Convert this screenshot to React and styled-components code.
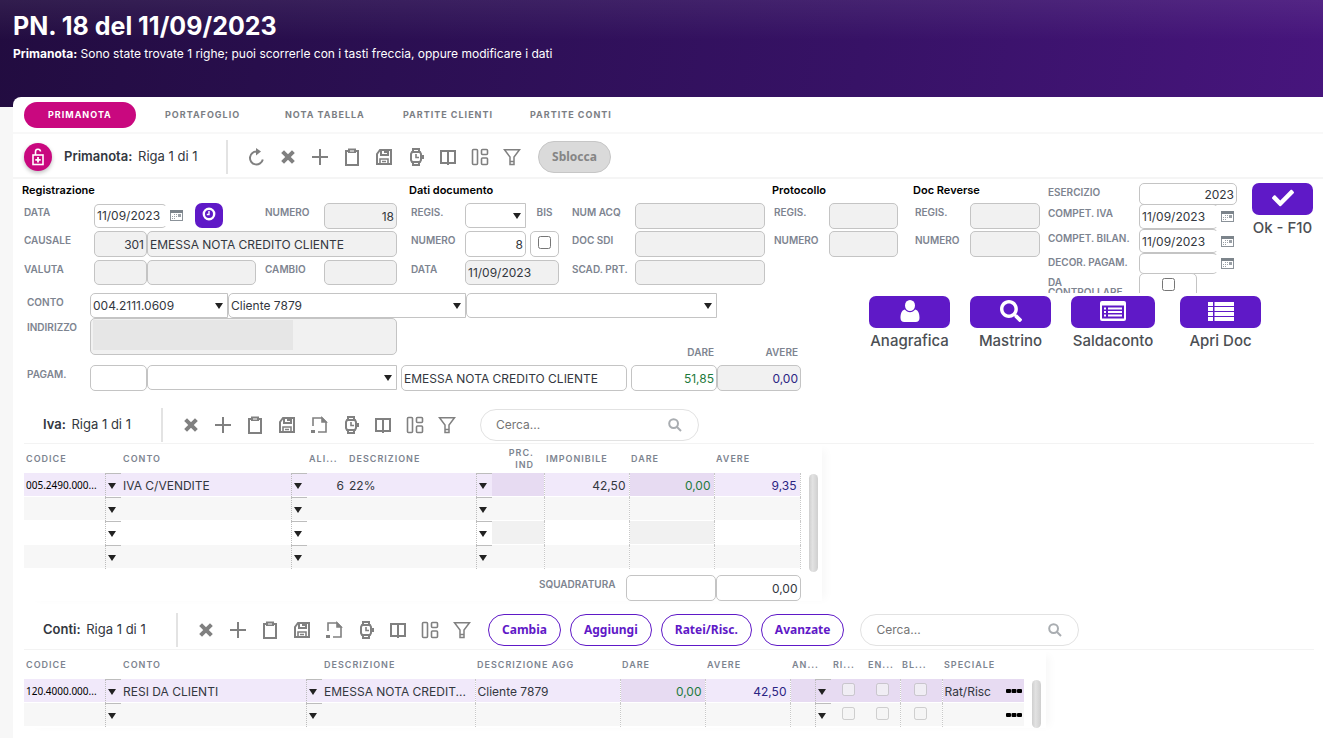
import React from "react";
import styled, { createGlobalStyle, css } from "styled-components";
import { FaCheck, FaSearch } from "react-icons/fa";

const GlobalStyle = createGlobalStyle`
  * {
    box-sizing: border-box;
  }
  body {
    margin: 0;
    background: #f7f7f7;
    font-family: Inter, sans-serif;
    font-size: 12px;
    color: #333740;
    overflow: hidden;
  }
  button, input, select, textarea {
    font: inherit;
    color: inherit;
    margin: 0;
  }
`;

const icons = {
  refresh: (
    <g strokeWidth="2">
      <path d="M10 3.5 A6.5 6.5 0 1 0 15.8 11.5" />
      <path d="M9 0 L14 3.6 L9 7.4 Z" fill="currentColor" stroke="none" />
    </g>
  ),
  remove: <path d="M3.6 3.6 L14.4 14.4 M14.4 3.6 L3.6 14.4" strokeWidth="4" />,
  add: <path d="M9 1 V17 M1 9 H17" strokeWidth="2" />,
  clipboard: (
    <g strokeWidth="2">
      <path d="M3 3 H15 V17 H3 Z" />
      <path d="M5 0.5 H13 V5 H5 Z" fill="currentColor" stroke="none" />
      <path d="M7 3 H11" stroke="#fff" strokeWidth="1" />
    </g>
  ),
  save: (
    <g strokeWidth="2">
      <path d="M5 2 H16 V16 H2 V6 Z" />
      <path d="M6 2 V7 H13 V2 M9 4 H13" />
      <path d="M5 16 V11 H13 V16 M7 13.5 H11" strokeWidth="1.6" />
    </g>
  ),
  page: (
    <g strokeWidth="1.6">
      <path d="M3 10 V2 H12 L16 6 V16 H8" />
      <path d="M12 2 V6 H16 Z" fill="currentColor" />
      <path d="M1 14 H5 V17 H1 Z" fill="currentColor" stroke="none" />
    </g>
  ),
  watch: (
    <g strokeWidth="2">
      <path d="M6 4 V1 H12 V4 M6 14 V17 H12 V14" />
      <path d="M5 4 H13 L14 6 V12 L13 14 H5 L4 12 V6 Z" />
      <path d="M9 6 V9.5 H12" strokeWidth="1.6" />
      <path d="M15 7 H17 V11 H15 Z" fill="currentColor" stroke="none" />
    </g>
  ),
  book: (
    <g strokeWidth="2">
      <path d="M2 3 H16 V15 H2 Z M9 3 V17" />
    </g>
  ),
  layout: (
    <g strokeWidth="1.6">
      <rect x="1.5" y="1.5" width="5" height="15" rx="1" />
      <rect x="10.5" y="1.5" width="6" height="5" rx="1" />
      <rect x="10.5" y="10" width="6" height="6.5" rx="1" />
    </g>
  ),
  filter: (
    <path
      d="M1.5 1.8 H16.5 L11 9 V16.5 H7 V9 Z M7.5 13.5 H10.5"
      strokeWidth="1.5"
    />
  ),
};

const labels = {
  refresh: "Aggiorna",
  remove: "Elimina",
  add: "Inserisci",
  clipboard: "Appunti",
  save: "Salva",
  page: "Duplica",
  watch: "Storico",
  book: "Dettaglio",
  layout: "Layout",
  filter: "Filtro",
};

const subTools = [
  "remove",
  "add",
  "clipboard",
  "save",
  "page",
  "watch",
  "book",
  "layout",
  "filter",
];
const mainTools = ["refresh", ...subTools.filter((t) => t !== "page")];

function Tools({ names }) {
  return (
    <ToolGroup>
      {names.map((name) => (
        <ToolButton key={name} type="button" aria-label={labels[name]}>
          <svg width="18" height="18" viewBox="0 0 18 18" fill="none" stroke="currentColor">
            {icons[name]}
          </svg>
        </ToolButton>
      ))}
    </ToolGroup>
  );
}

function UserIcon() {
  return (
    <svg width="20" height="22" viewBox="0 0 20 22" fill="currentColor">
      <ellipse cx="10" cy="5.5" rx="5" ry="5.5" />
      <path d="M4.8 9.6 C6 11.3 8 12.2 10 12.2 C12 12.2 14 11.3 15.2 9.6 C18.5 10.3 19.5 14 19.5 18 C19.5 20.4 18 22 15.8 22 H4.2 C2 22 0.5 20.4 0.5 18 C0.5 14 1.5 10.3 4.8 9.6 Z" />
    </svg>
  );
}

function CardIcon() {
  return (
    <svg width="26" height="20" viewBox="0 0 26 20" fill="currentColor">
      <path
        fillRule="evenodd"
        d="M2 0 H24 Q26 0 26 2 V18 Q26 20 24 20 H2 Q0 20 0 18 V2 Q0 0 2 0 Z M2 4.5 V17.5 H24 V4.5 Z"
      />
      <path d="M4 6.5 H6 V8.5 H4 Z M4 10 H6 V12 H4 Z M4 13.5 H6 V15.5 H4 Z" />
      <path d="M8 6.5 H22 V8.5 H8 Z M8 10 H22 V12 H8 Z M8 13.5 H22 V15.5 H8 Z" />
    </svg>
  );
}

function ListIcon() {
  return (
    <svg width="26" height="20" viewBox="0 0 26 20" fill="currentColor">
      {[0, 5, 10, 15].map((y) => (
        <g key={y}>
          <rect x="0" y={y + 1} width="5" height="4" />
          <rect x="6.5" y={y + 1} width="19.5" height="4" />
        </g>
      ))}
    </svg>
  );
}

function Text({ id, label, value = "", ...rest }) {
  return (
    <Field id={id} aria-label={label} defaultValue={value} {...rest} />
  );
}

function Combo({ id, label, value = "", width }) {
  return (
    <ComboBox $width={width}>
      <select id={id} aria-label={label} defaultValue={value}>
        <option>{value}</option>
      </select>
    </ComboBox>
  );
}

function CalendarIcon() {
  return (
    <svg width="13" height="11" viewBox="0 0 13 11">
      <rect x="0.5" y="0.5" width="12" height="10" fill="#fff" stroke="#8b9299" />
      <rect x="0" y="0" width="13" height="3" fill="#7c848b" />
      <g fill="#9aa0a6">
        <rect x="4" y="4" width="1" height="1" />
        <rect x="6" y="4" width="1" height="1" />
        <rect x="2" y="6" width="1" height="1" />
        <rect x="4" y="6" width="1" height="1" />
        <rect x="6" y="6" width="1" height="1" />
        <rect x="2" y="8" width="1" height="1" />
        <rect x="4" y="8" width="1" height="1" />
        <rect x="8" y="4" width="3" height="3" />
      </g>
    </svg>
  );
}

function DateInput({ id, value, width, height }) {
  return (
    <DateBox>
      <Field id={id} defaultValue={value} $width={width} $height={height} $open />
      <IconButton type="button" aria-label="Apri calendario">
        <CalendarIcon />
      </IconButton>
    </DateBox>
  );
}

function Search({ id, gap }) {
  return (
    <SearchBox $gap={gap}>
      <input id={id} type="search" placeholder="Cerca..." aria-label="Cerca" />
      <svg width="14" height="14" viewBox="0 0 14 14" fill="none" stroke="#a9adb1" strokeWidth="2">
        <circle cx="5.6" cy="5.6" r="4.4" />
        <path d="M9 9 L13 13" />
      </svg>
    </SearchBox>
  );
}

function CellSelect({ value = "", label, small }) {
  return (
    <CellCombo $small={small}>
      <span>{value}</span>
      <i>
        <select aria-label={label} defaultValue="">
          <option value=""></option>
        </select>
      </i>
    </CellCombo>
  );
}

const ivaRows = [
  { codice: "005.2490.000...", conto: "IVA C/VENDITE", ali: "6", descr: "22%", imp: "42,50", dare: "0,00", avere: "9,35" },
  {},
  {},
  {},
];

const contiRows = [
  {
    codice: "120.4000.000...",
    conto: "RESI DA CLIENTI",
    descr: "EMESSA NOTA CREDIT...",
    agg: "Cliente 7879",
    dare: "0,00",
    avere: "42,50",
    speciale: "Rat/Risc",
  },
  {},
];

export default function App() {
  return (
    <>
      <GlobalStyle />
      <Banner>
        <h1>PN. 18 del 11/09/2023</h1>
        <p>
          <b>Primanota:</b> Sono state trovate 1 righe; puoi scorrerle con i
          tasti freccia, oppure modificare i dati
        </p>
      </Banner>
      <Panel>
        <Tabs>
          <Tab href="#primanota" $active>Primanota</Tab>
          <Tab href="#portafoglio">Portafoglio</Tab>
          <Tab href="#nota">Nota tabella</Tab>
          <Tab href="#clienti">Partite clienti</Tab>
          <Tab href="#conti">Partite conti</Tab>
        </Tabs>

        <MainBar>
          <LockButton type="button" aria-label="Blocca">
            <svg width="12" height="18" viewBox="0 0 12 18" fill="none" stroke="#fff">
              <path d="M3.5 7 V4 A2.5 2.5 0 0 1 8.5 3.5" strokeWidth="1.6" />
              <rect x="1" y="7" width="10" height="9.5" strokeWidth="1.6" />
              <path d="M6 9 V14.5 M3.3 11.8 H8.7" strokeWidth="1.8" />
            </svg>
          </LockButton>
          <BarTitle $width={164}>
            <b>Primanota:</b> Riga 1 di 1
          </BarTitle>
          <Tools names={mainTools} />
          <UnlockButton type="button">Sblocca</UnlockButton>
        </MainBar>

        <FormTop>
          <Section $width={387}>
            <h2>Registrazione</h2>
            <FieldGrid $cols="70px 53px 109px 9px 59px 73px">
              <Label htmlFor="data">Data</Label>
              <Wide $span={3}>
                <DateInput id="data" value="11/09/2023" width={73} height={24} />
                <ClockButton type="button" aria-label="Ora">
                  <svg width="14" height="14" viewBox="0 0 14 14" fill="none" stroke="#fff">
                    <circle cx="7" cy="7" r="5.2" strokeWidth="2.4" />
                    <path d="M7 4 V7.5 H4.8" strokeWidth="1.4" />
                  </svg>
                </ClockButton>
              </Wide>
              <Label htmlFor="numero">Numero</Label>
              <Text id="numero" value="18" readOnly $off $right />

              <Label htmlFor="causale">Causale</Label>
              <Text id="causale" value="301" readOnly $off $right />
              <Text label="Descrizione causale" value="EMESSA NOTA CREDITO CLIENTE" readOnly $off $span={4} />

              <Label htmlFor="valuta">Valuta</Label>
              <Text id="valuta" readOnly $off $height={25} />
              <Text label="Descrizione valuta" readOnly $off $height={25} />
              <span />
              <Label htmlFor="cambio">Cambio</Label>
              <Text id="cambio" readOnly $off $height={25} />
            </FieldGrid>
          </Section>

          <Section $width={363}>
            <h2>Dati documento</h2>
            <FieldGrid $cols="54px 61px 4px 29px 13px 63px 130px">
              <Label htmlFor="regis">Regis.</Label>
              <Combo id="regis" />
              <span />
              <Label htmlFor="bis" $center>Bis</Label>
              <span />
              <Label htmlFor="acq">Num acq</Label>
              <Text id="acq" readOnly $off />

              <Label htmlFor="numdoc">Numero</Label>
              <Text id="numdoc" value="8" $right />
              <span />
              <CheckBox>
                <input id="bis" type="checkbox" />
              </CheckBox>
              <span />
              <Label htmlFor="sdi">Doc SDI</Label>
              <Text id="sdi" readOnly $off />

              <Label htmlFor="datadoc">Data</Label>
              <Text id="datadoc" value="11/09/2023" readOnly $off $span={3} $height={25} />
              <span />
              <Label htmlFor="scad">Scad. prt.</Label>
              <Text id="scad" readOnly $off $height={25} />
            </FieldGrid>
          </Section>

          <Section $width={141}>
            <h2>Protocollo</h2>
            <FieldGrid $cols="55px 69px">
              <Label htmlFor="pregis">Regis.</Label>
              <Text id="pregis" readOnly $off />
              <Label htmlFor="pnum">Numero</Label>
              <Text id="pnum" readOnly $off />
            </FieldGrid>
          </Section>

          <Section $width={133}>
            <h2>Doc Reverse</h2>
            <FieldGrid $cols="55px 70px">
              <Label htmlFor="rregis">Regis.</Label>
              <Text id="rregis" readOnly $off />
              <Label htmlFor="rnum">Numero</Label>
              <Text id="rnum" readOnly $off />
            </FieldGrid>
          </Section>

          <YearGrid>
            <Label htmlFor="esercizio">Esercizio</Label>
            <Text id="esercizio" value="2023" $right $height={22} />
            <Label htmlFor="civa">Compet. IVA</Label>
            <DateInput id="civa" value="11/09/2023" width={79} height={25} />
            <Label htmlFor="cbil">Compet. bilan.</Label>
            <DateInput id="cbil" value="11/09/2023" width={79} height={24} />
            <Label htmlFor="decor">Decor. pagam.</Label>
            <DateInput id="decor" value="" width={79} height={21} />
            <TightLabel htmlFor="controllare">Da controllare</TightLabel>
            <CheckBox $width={58}>
              <input id="controllare" type="checkbox" />
            </CheckBox>
          </YearGrid>

          <ActionButton type="button" $width={61}>
            <span><FaCheck size={22} /></span>
            Ok - F10
          </ActionButton>
        </FormTop>

        <FormBottom>
          <div>
            <Line>
              <Label htmlFor="conto">Conto</Label>
              <Combo id="conto" value="004.2111.0609" width={138} />
              <Combo label="Cliente" value="Cliente 7879" width={238} />
              <Combo label="Altro conto" width={251} />
            </Line>
            <Line $height={47}>
              <Label htmlFor="indirizzo">Indirizzo</Label>
              <Address id="indirizzo" readOnly />
              <Totals>
                <span>Dare</span>
                <span>Avere</span>
              </Totals>
            </Line>
            <Line>
              <Label htmlFor="pagam">Pagam.</Label>
              <Text id="pagam" $width={57} />
              <Combo label="Descrizione pagamento" width={250} />
              <Gap />
              <Text label="Descrizione" value="EMESSA NOTA CREDITO CLIENTE" $width={226} />
              <Gap />
              <Text label="Dare" value="51,85" $right $width={86} $color="#1e7a3c" />
              <Text label="Avere" value="0,00" readOnly $off $right $width={84} $color="#2b2483" />
            </Line>
          </div>
          <Actions>
            <ActionButton type="button" $width={81}>
              <span><UserIcon /></span>
              Anagrafica
            </ActionButton>
            <ActionButton type="button" $width={81}>
              <span><FaSearch size={22} /></span>
              Mastrino
            </ActionButton>
            <ActionButton type="button" $width={84}>
              <span><CardIcon /></span>
              Saldaconto
            </ActionButton>
            <ActionButton type="button" $width={81}>
              <span><ListIcon /></span>
              Apri Doc
            </ActionButton>
          </Actions>
        </FormBottom>

        <SubBar>
          <BarTitle $width={120}>
            <b>Iva:</b> Riga 1 di 1
          </BarTitle>
          <Tools names={subTools} />
          <Search id="cercaIva" gap={24} />
        </SubBar>
        <TableArea $width={798}>
          <div>
            <Table>
              <colgroup>
                {[97, 186, 40, 145, 52, 85, 85, 86].map((w, i) => (
                  <Col key={i} $width={w} />
                ))}
              </colgroup>
              <thead>
                <tr>
                  <th>Codice</th>
                  <th>Conto</th>
                  <th>Ali...</th>
                  <th>Descrizione</th>
                  <Th $right>Prc. Ind</Th>
                  <th>Imponibile</th>
                  <th>Dare</th>
                  <th>Avere</th>
                </tr>
              </thead>
              <tbody>
                {ivaRows.map((r, i) => {
                  const shade = i === 0 ? "#e7dbf2" : i === 2 ? "#f1f1f1" : undefined;
                  return (
                    <Row key={i} $active={i === 0} $odd={i % 2 === 1}>
                      <td><CellSelect value={r.codice} label="Codice" small /></td>
                      <td><CellSelect value={r.conto} label="Conto" /></td>
                      <Cell $right>{r.ali}</Cell>
                      <td><CellSelect value={r.descr} label="Descrizione" /></td>
                      <Cell $bg={shade} $line />
                      <Cell $right $line>{r.imp}</Cell>
                      <Cell $right $line $bg={shade} $color="#1e7a3c">{r.dare}</Cell>
                      <Cell $right $line $color="#2b2483">{r.avere}</Cell>
                    </Row>
                  );
                })}
              </tbody>
            </Table>
            <Balance>
              <Label htmlFor="squad">Squadratura</Label>
              <Text id="squad" $width={90} />
              <Text label="Squadratura avere" value="0,00" $right $width={85} />
            </Balance>
          </div>
          <Scroll $height={98} />
        </TableArea>

        <SubBar $conti>
          <BarTitle $width={135}>
            <b>Conti:</b> Riga 1 di 1
          </BarTitle>
          <Tools names={subTools} />
          <Pills>
            <Pill type="button">Cambia</Pill>
            <Pill type="button">Aggiungi</Pill>
            <Pill type="button">Ratei/Risc.</Pill>
            <Pill type="button">Avanzate</Pill>
          </Pills>
          <Search id="cercaConti" gap={16} />
        </SubBar>
        <TableArea $width={1022}>
          <Table>
            <colgroup>
              {[97, 201, 153, 145, 85, 85, 41, 35, 34, 42, 62, 20].map((w, i) => (
                <Col key={i} $width={w} />
              ))}
            </colgroup>
            <thead>
              <tr>
                <th>Codice</th>
                <th>Conto</th>
                <th>Descrizione</th>
                <th>Descrizione agg</th>
                <th>Dare</th>
                <th>Avere</th>
                <th>An...</th>
                <th>Ri...</th>
                <th>En...</th>
                <th>Bl...</th>
                <th colSpan="2">Speciale</th>
              </tr>
            </thead>
            <tbody>
              {contiRows.map((r, i) => {
                const shade = i === 0 ? "#e7dbf2" : undefined;
                return (
                  <Row key={i} $active={i === 0} $odd={i % 2 === 1}>
                    <td><CellSelect value={r.codice} label="Codice" small /></td>
                    <td><CellSelect value={r.conto} label="Conto" /></td>
                    <Cell $line>{r.descr}</Cell>
                    <Cell $line>{r.agg}</Cell>
                    <Cell $right $line $bg={shade} $color="#1e7a3c">{r.dare}</Cell>
                    <Cell $right $line $color="#2b2483">{r.avere}</Cell>
                    <Cell $bg={shade}><CellSelect label="Analitica" /></Cell>
                    {["Ri", "En", "Bl"].map((c) => (
                      <Cell key={c} $bg={shade} $line={c !== "Ri"} $check>
                        <input type="checkbox" aria-label={c} disabled />
                      </Cell>
                    ))}
                    <Cell $bg={shade}>{r.speciale}</Cell>
                    <Cell $bg={shade}>
                      <IconButton type="button" aria-label="Altro">
                        <svg width="16" height="6" viewBox="0 0 16 6">
                          <rect x="0" y="1" width="5" height="4" rx="1" />
                          <rect x="5.5" y="1" width="5" height="4" rx="1" />
                          <rect x="11" y="1" width="5" height="4" rx="1" />
                        </svg>
                      </IconButton>
                    </Cell>
                  </Row>
                );
              })}
            </tbody>
          </Table>
          <Scroll $height={48} />
        </TableArea>
      </Panel>
    </>
  );
}

const Banner = styled.header`
  height: 107px;
  padding: 10px 13px;
  color: #fff;
  background: linear-gradient(to bottom, rgba(255, 255, 255, 0.07), transparent 40px),
    linear-gradient(100deg, #220c40 0%, #2b0f52 30%, #371266 65%, #47157d 100%);
  h1 {
    margin: 0;
    font-size: 25px;
    line-height: 32px;
    font-weight: 700;
  }
  p {
    margin: 4px 0 0;
    line-height: 16px;
  }
`;

const Panel = styled.main`
  margin: -10px 0 0 13px;
  min-height: calc(100vh - 97px);
  background: #fff;
  border-top-left-radius: 8px;
`;

const Tabs = styled.nav`
  display: grid;
  grid-template-columns: 141px 120px 118px 127px auto;
  justify-content: start;
  height: 37px;
  padding: 5px 11px;
  border-bottom: 2px solid #f8f8f8;
`;

const Tab = styled.a`
  justify-self: start;
  height: 26px;
  padding: ${(p) => (p.$active ? "0 24px" : "0")};
  border-radius: 13px;
  font-size: 9px;
  line-height: 25px;
  font-weight: 700;
  letter-spacing: 1px;
  text-transform: uppercase;
  text-decoration: none;
  white-space: nowrap;
  color: ${(p) => (p.$active ? "#fff" : "#7b7e84")};
  background: ${(p) => (p.$active ? "#c9087f" : "none")};
`;

const MainBar = styled.div`
  display: flex;
  align-items: center;
  height: 45px;
  padding: 2px 0 0 11px;
  border-bottom: 2px solid #f5f5f5;
`;

const LockButton = styled.button`
  display: grid;
  place-items: center;
  width: 28px;
  height: 28px;
  margin-right: 12px;
  padding: 0;
  border: 0;
  border-radius: 50%;
  background: #c9087f;
  box-shadow: 0 2px 4px rgba(0, 0, 0, 0.25);
`;

const BarTitle = styled.div`
  width: ${(p) => p.$width}px;
  height: 34px;
  line-height: 33px;
  font-size: 13px;
  border-right: 2px solid #e3e3e3;
  b {
    font-weight: 600;
    margin-right: 2px;
  }
`;

const ToolGroup = styled.div`
  display: flex;
  gap: 14px;
  padding-left: 19px;
`;

const ToolButton = styled.button`
  display: flex;
  padding: 0;
  border: 0;
  background: none;
  color: #808080;
`;

const UnlockButton = styled.button`
  width: 73px;
  height: 32px;
  margin-left: 17px;
  padding: 0;
  border: 1px solid #c6c6c6;
  border-radius: 16px;
  background: #dadada;
  color: #858585;
  font-family: "Noto Sans", sans-serif;
  font-weight: 700;
`;

const FormTop = styled.div`
  display: flex;
  padding: 4px 0 0 9px;
`;

const Section = styled.section`
  flex: 0 0 ${(p) => p.$width}px;
  h2 {
    margin: 0 0 5px;
    font-size: 11px;
    line-height: 15px;
    font-weight: 600;
    color: #000;
  }
`;

const FieldGrid = styled.div`
  display: grid;
  grid-template-columns: ${(p) => p.$cols};
  grid-template-rows: 28px 29px;
  align-items: start;
  padding-left: 2px;
`;

const Label = styled.label`
  font-size: 10px;
  line-height: 18px;
  font-weight: 600;
  text-align: ${(p) => (p.$center ? "center" : "left")};
  text-transform: uppercase;
  white-space: nowrap;
  color: #7d8490;
`;

const TightLabel = styled(Label)`
  line-height: 10px;
  padding-top: 4px;
  white-space: normal;
`;

const frame = css`
  border: 1px solid #c4c4c4;
  border-radius: 5px;
  background: #fff;
`;

const Field = styled.input`
  ${frame}
  min-width: 0;
  width: ${(p) => (p.$width ? p.$width + "px" : "100%")};
  height: ${(p) => p.$height || 26}px;
  padding: 0 2px;
  outline: 0;
  text-align: ${(p) => (p.$right ? "right" : "left")};
  color: ${(p) => p.$color || "#333740"};
  ${(p) => p.$off && "background: #f1f1f1;"}
  ${(p) => p.$span && `grid-column: span ${p.$span};`}
  ${(p) => p.$open && "border-right-color: transparent;"}
`;

const Wide = styled.div`
  display: flex;
  grid-column: span ${(p) => p.$span};
`;

const DateBox = styled.div`
  display: flex;
  align-items: center;
  gap: 3px;
`;

const IconButton = styled.button`
  display: flex;
  padding: 0;
  border: 0;
  background: none;
`;

const ClockButton = styled.button`
  display: flex;
  justify-content: center;
  width: 28px;
  height: 25px;
  margin-left: 12px;
  padding: 4px 0;
  border: 0;
  border-radius: 7px;
  background: #5f19c7;
`;

const ComboBox = styled.div`
  display: grid;
  align-items: center;
  width: ${(p) => (p.$width ? p.$width + "px" : "100%")};
  select {
    ${frame}
    grid-area: 1 / 1;
    width: 100%;
    height: 25px;
    padding: 0 2px;
    border-radius: 5px 0 0 5px;
    appearance: none;
    outline: 0;
  }
  &::after {
    content: "";
    grid-area: 1 / 1;
    justify-self: end;
    margin-right: 5px;
    border: solid transparent;
    border-width: 6px 4px 0;
    border-top-color: #222;
    pointer-events: none;
  }
`;

const CheckBox = styled.div`
  ${frame}
  display: flex;
  justify-content: center;
  width: ${(p) => (p.$width ? p.$width + "px" : "100%")};
  height: 26px;
  padding-top: 4px;
  input {
    width: 13px;
    height: 13px;
  }
`;

const YearGrid = styled.div`
  display: grid;
  grid-template-columns: 91px 98px;
  grid-template-rows: 21px 25px 24px 20px 26px;
  align-items: start;
  height: 110px;
  margin-left: 2px;
  overflow: hidden;
`;

const ActionButton = styled.button`
  display: flex;
  flex-direction: column;
  align-items: center;
  align-self: start;
  width: ${(p) => p.$width}px;
  padding: 0;
  border: 0;
  background: none;
  font-size: 15px;
  line-height: 26px;
  font-weight: 500;
  white-space: nowrap;
  color: #4c4f54;
  span {
    display: grid;
    place-items: center;
    width: 100%;
    height: 32px;
    padding-bottom: 2px;
    border-radius: 7px;
    background: #5f19c7;
    color: #fff;
  }
  ${FormTop} > & {
    margin-left: 15px;
  }
`;

const FormBottom = styled.div`
  display: flex;
  padding-left: 14px;
`;

const Line = styled.div`
  display: flex;
  align-items: flex-start;
  height: ${(p) => p.$height || 25}px;
  ${Label} {
    flex: 0 0 63px;
  }
`;

const Address = styled.textarea`
  ${frame}
  width: 307px;
  height: 37px;
  background: linear-gradient(#e6e6e6, #e6e6e6) 2px 1px / 200px 30px no-repeat #f1f1f1;
  resize: none;
  outline: 0;
`;

const Totals = styled.div`
  display: flex;
  margin: 25px 0 0 233px;
  font-size: 10px;
  line-height: 18px;
  font-weight: 600;
  text-transform: uppercase;
  text-align: right;
  color: #7d8490;
  span {
    width: 84px;
  }
`;

const Gap = styled.span`
  width: 4px;
`;

const Actions = styled.div`
  display: flex;
  gap: 20px;
  margin-left: 68px;
  padding-top: 3px;
  ${ActionButton}:last-child {
    margin-left: 5px;
  }
`;

const SubBar = styled.div`
  display: flex;
  align-items: center;
  height: ${(p) => (p.$conti ? 40 : 38)}px;
  margin: ${(p) => (p.$conti ? 9 : 16)}px 9px 0 11px;
  padding-left: 19px;
  border-bottom: 1px solid #f3f3f3;
`;

const SearchBox = styled.div`
  display: flex;
  align-items: center;
  width: 219px;
  height: 32px;
  margin-left: ${(p) => p.$gap}px;
  padding: 0 16px 0 15px;
  border: 1px solid #e2e2e2;
  border-radius: 16px;
  input {
    flex: 1;
    min-width: 0;
    padding: 0;
    border: 0;
    outline: 0;
    background: none;
  }
  input::placeholder {
    color: #757575;
  }
`;

const TableArea = styled.div`
  display: flex;
  align-items: flex-start;
  gap: 8px;
  width: ${(p) => p.$width}px;
  margin-left: 11px;
  box-shadow: 8px 2px 8px -4px rgba(0, 0, 0, 0.03);
`;

const Col = styled.col`
  width: ${(p) => p.$width}px;
`;

const Table = styled.table`
  flex: none;
  table-layout: fixed;
  width: 0;
  border-collapse: collapse;
  th {
    height: 29px;
    padding: 0 2px;
    font-size: 9px;
    line-height: 12px;
    font-weight: 600;
    letter-spacing: 1px;
    text-align: left;
    text-transform: uppercase;
    color: #7d8490;
  }
  td {
    height: 24px;
    padding: 0;
    overflow: hidden;
    white-space: nowrap;
    box-shadow: inset 0 -1px #fff;
  }
`;

const Th = styled.th`
  && {
    text-align: right;
    padding-right: 10px;
  }
`;

const Row = styled.tr`
  background: ${(p) => (p.$active ? "#f1e9fa" : p.$odd ? "#f7f7f7" : "#fff")};
`;

const Cell = styled.td`
  && {
    padding: ${(p) => (p.children?.type === CellSelect ? "0" : "0 3px 0 2px")};
    text-align: ${(p) => (p.$right ? "right" : p.$check ? "center" : "left")};
    color: ${(p) => p.$color || "#333740"};
    background: ${(p) => p.$bg || "none"};
    border-right: ${(p) => (p.$line ? "1px dotted #c8c8c8" : "0")};
  }
  input {
    display: block;
    width: 13px;
    height: 13px;
    margin: 0 auto 4px;
  }
`;

const CellCombo = styled.div`
  display: flex;
  align-items: center;
  height: 24px;
  span {
    flex: 1;
    min-width: 0;
    padding-left: 2px;
    font-size: ${(p) => (p.$small ? 10 : 12)}px;
    ${(p) => p.$small && 'font-family: "Noto Sans", sans-serif; color: #000;'}
  }
  i {
    display: grid;
    align-items: center;
    width: 16px;
    height: 24px;
    border-top: 1px solid #bdbdbd;
    border-left: 1px dotted #bdbdbd;
  }
  i::after {
    content: "";
    grid-area: 1 / 1;
    margin-left: 2px;
    width: 0;
    border: solid transparent;
    border-width: 6px 4px 0;
    border-top-color: #222;
    pointer-events: none;
  }
  select {
    grid-area: 1 / 1;
    width: 15px;
    height: 22px;
    padding: 0;
    border: 0;
    outline: 0;
    appearance: none;
    background: none;
  }
`;

const Balance = styled.div`
  display: flex;
  justify-content: flex-end;
  padding: 6px 0 0;
  ${Label} {
    margin-right: 10px;
  }
`;

const Scroll = styled.div`
  width: 9px;
  height: ${(p) => p.$height}px;
  margin-top: 30px;
  border-radius: 5px;
  background: linear-gradient(to right, #cfcfcf, #e2e2e2 40%, #cfcfcf);
`;

const Pills = styled.div`
  display: flex;
  gap: 9px;
  margin-left: 17px;
`;

const Pill = styled.button`
  height: 32px;
  padding: 0 13px;
  border: 1px solid #5f19c7;
  border-radius: 16px;
  background: #fff;
  color: #5f19c7;
  font-family: "Noto Sans", sans-serif;
  font-weight: 700;
`;
